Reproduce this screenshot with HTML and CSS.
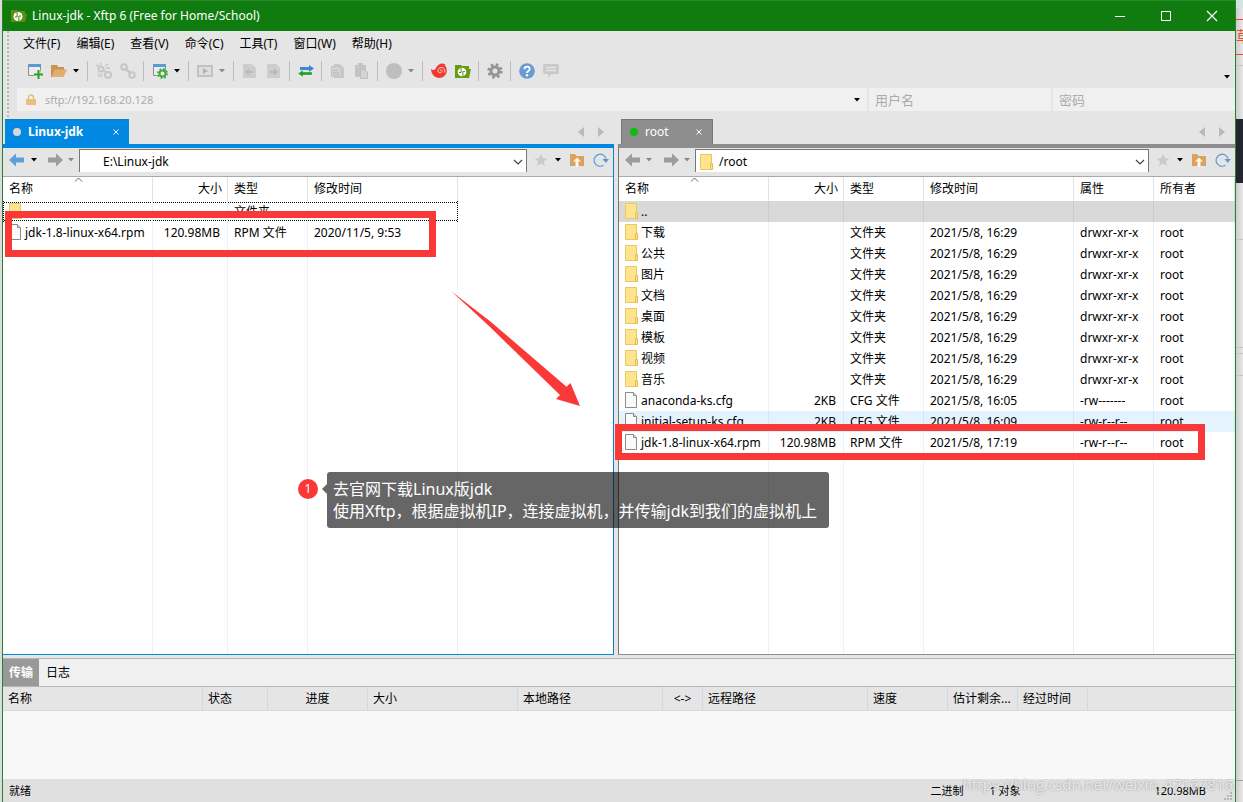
FILE: index.html
```
<!DOCTYPE html>
<html lang="zh-CN">
<head>
<meta charset="utf-8">
<title>Linux-jdk - Xftp 6</title>
<link rel="stylesheet" href="styles.css">
</head>
<body>
<svg class="defs" aria-hidden="true">
  <symbol id="folder" viewBox="0 0 13 16"><path d="M.5.5h11v15H.5z" fill="#ffe48f" stroke="#ecc75a"/><path d="M10.500 9.500h2v6h-2z" fill="#ffe48f" stroke="#e9bd45"/></symbol>
  <symbol id="file" viewBox="0 0 13 16"><path d="M.5.5h8l3 3v12H.5z" fill="#fafafa" stroke="#8b8b8b"/><path d="M8.500.5v3h3" fill="#ddd" stroke="#8b8b8b"/></symbol>
  <symbol id="caret" viewBox="0 0 6 4"><path d="M0 0h6L3 3.500z" fill="currentColor"/></symbol>
  <symbol id="back" viewBox="0 0 16 14"><path d="M0 7l7-6.500V4.500h8v5H7v4z" fill="currentColor"/></symbol>
  <symbol id="fwd" viewBox="0 0 16 14"><path d="M16 7L9 .5V4.500H1v5h8v4z" fill="currentColor"/></symbol>
  <symbol id="star" viewBox="0 0 14 14"><path d="M7 .8l1.800 4.200 4.600.4-3.500 3 1.100 4.600-4-2.500L3 13l1.100-4.600-3.500-3L5.200 5z" fill="#cbcbcb"/></symbol>
  <symbol id="up" viewBox="0 0 16 14"><path d="M1 1h5l1.500 2H15v10H1z" fill="#d8a25f"/><path d="M8 4.500l4 4h-2.500V14h-3V8.500H4z" fill="#fff4e6"/></symbol>
  <symbol id="refresh" viewBox="0 0 16 16"><path d="M10.500 13.200A6 6 0 1 1 13 7" fill="none" stroke="#5b9bd5" stroke-width="1.200"/><path d="M9.500 7H16l-3.200 4z" fill="#5b9bd5"/></symbol>
  <symbol id="chev" viewBox="0 0 10 6"><path d="M1 1l4 4 4-4" fill="none" stroke="#444" stroke-width="1.200"/></symbol>
  <symbol id="left" viewBox="0 0 6 10"><path d="M6 0v10L0 5z" fill="#bababa"/></symbol>
  <symbol id="right" viewBox="0 0 6 10"><path d="M0 0v10l6-5z" fill="#bababa"/></symbol>
  <symbol id="sort" viewBox="0 0 9 5"><path d="M1 4.500l3.500-3.500 3.500 3.500" fill="none" stroke="#666"/></symbol>
  <symbol id="cross" viewBox="0 0 8 8"><path d="M1.500 1.500l5 5m0-5l-5 5" stroke="#fff" fill="none"/></symbol>
  <symbol id="xftp" viewBox="0 0 16 16"><path d="M0 2h6l1 1h7v3h2l-2 9H0z" fill="#6a9a13"/><circle cx="7" cy="9" r="4.300" fill="#fff"/><path d="M6.100 5v4.500H4M7.900 13V8.500H10" stroke="#5c8c10" fill="none" stroke-width="1"/></symbol>
  <symbol id="gear" viewBox="0 0 16 16"><circle cx="8" cy="8" r="6.200" fill="none" stroke="currentColor" stroke-width="3" stroke-dasharray="2.500 2.370"/><circle cx="8" cy="8" r="4" fill="none" stroke="currentColor" stroke-width="3"/></symbol>
</svg>

<main class="window">
  <header class="titlebar">
    <svg class="app-icon" viewBox="0 0 16 14"><path d="M0 1h6l1 1h7v3h2l-2 8H0z" fill="#5e8f0f"/><circle cx="7" cy="7.500" r="4.500" fill="#fff"/><path d="M6.100 3v5H4M7.900 12V7H10" stroke="#4d8010" fill="none" stroke-width="1"/></svg>
    <h1>Linux-jdk - Xftp 6 (Free for Home/School)</h1>
    <button class="win-btn" aria-label="最小化"><svg viewBox="0 0 12 12"><path d="M1 6.500h10" stroke="#fff"/></svg></button>
    <button class="win-btn" aria-label="最大化"><svg viewBox="0 0 12 12"><path d="M1.500 1.500h9v9h-9z" stroke="#fff" fill="none"/></svg></button>
    <button class="win-btn" aria-label="关闭"><svg viewBox="0 0 12 12"><path d="M1 1l10 10m0-10L1 11" stroke="#fff" stroke-width="1.200"/></svg></button>
  </header>

  <div class="bars">
    <nav class="menu">
      <button>文件(F)</button><button>编辑(E)</button><button>查看(V)</button><button>命令(C)</button><button>工具(T)</button><button>窗口(W)</button><button>帮助(H)</button>
    </nav>
    <div class="toolbar">
      <button class="tool" aria-label="新建"><svg viewBox="0 0 16 16"><path d="M1.500 1.500h12v11h-12z" fill="#ececec" stroke="#8d8d8d"/><path d="M1 1h13v3H1z" fill="#5b9bd5"/><path d="M11.500 7v9M7 11.500h9" stroke="#e5e5e5" stroke-width="4"/><path d="M11.500 7v9M7 11.500h9" stroke="#27a127" stroke-width="2"/></svg></button>
      <button class="tool" aria-label="打开"><svg viewBox="0 0 16 16"><path d="M0 2h6l1 2h6v3H4l-3 7H0z" fill="#c99450"/><path d="M4 6.500h12L12.500 14H.5z" fill="#dfae70"/></svg></button>
      <button class="drop" aria-label="打开菜单"><svg><use href="#caret"/></svg></button>
      <span class="sep"></span>
      <button class="tool" aria-label="断开"><svg viewBox="0 0 16 16" fill="none" stroke="#c6c6c6" stroke-width="2"><circle cx="5" cy="6" r="2.500"/><circle cx="12" cy="12" r="3"/><path d="M0 2l3 1M5 0v2M9 3l3-2M8 7l2 2M10 5h4M3 10v4M6 11l-1 3" stroke-width="1.500"/></svg></button>
      <button class="tool" aria-label="重新连接"><svg viewBox="0 0 16 16" fill="none" stroke="#c6c6c6" stroke-width="2"><circle cx="4" cy="4" r="2.800"/><circle cx="12" cy="12" r="2.800"/><path d="M5 5l6 6" stroke-width="2.500"/></svg></button>
      <span class="sep"></span>
      <button class="tool" aria-label="会话属性"><svg viewBox="0 0 16 16"><path d="M1.500 1.500h12v11h-12z" fill="#ececec" stroke="#8d8d8d"/><path d="M1 1h13v3H1z" fill="#5b9bd5"/><circle cx="10.500" cy="10.500" r="3" fill="#eee" stroke="#3faa42" stroke-width="2"/><circle cx="10.500" cy="10.500" r="4.500" fill="none" stroke="#3faa42" stroke-width="2" stroke-dasharray="1.700 1.830"/></svg></button>
      <button class="drop" aria-label="属性菜单"><svg><use href="#caret"/></svg></button>
      <span class="sep"></span>
      <button class="tool" aria-label="运行"><svg viewBox="0 0 16 16"><path d="M1 3h14v10H1z" fill="#dedede" stroke="#c2c2c2" stroke-width="2"/><path d="M6 5l5 3-5 3z" fill="#b2b2b2"/></svg></button>
      <button class="drop dim" aria-label="运行菜单"><svg><use href="#caret"/></svg></button>
      <span class="sep"></span>
      <button class="tool" aria-label="向左传输"><svg viewBox="0 0 16 16"><path d="M1 1h9l4 4v10H1z" fill="#cdcdcd"/><path d="M3 9l4-3.500V8h4v2H7v2.500z" fill="#b8b8b8"/></svg></button>
      <button class="tool" aria-label="向右传输"><svg viewBox="0 0 16 16"><path d="M1 1h9l4 4v10H1z" fill="#cdcdcd"/><path d="M12 9L8 5.500V8H4v2h4v2.500z" fill="#b8b8b8"/></svg></button>
      <span class="sep"></span>
      <button class="tool" aria-label="同步"><svg viewBox="0 0 16 16"><path d="M16 5.500L11 2v2H2v3h9v2z" fill="#3f87d2"/><path d="M0 10.500L5 7v2h9v3H5v2z" fill="#1fa01f" stroke="#e5e5e5" stroke-width=".4"/></svg></button>
      <span class="sep"></span>
      <button class="tool" aria-label="复制"><svg viewBox="0 0 16 16"><path d="M4 1h6l4 4v10H4z" fill="#c9c9c9"/><path d="M1.500 3.500h7l3 3v7h-10z" fill="#d3d3d3" stroke="#c2c2c2"/><path d="M3 7.500h5M3 9.500h6M3 11.500h6" stroke="#bcbcbc"/></svg></button>
      <button class="tool" aria-label="粘贴"><svg viewBox="0 0 16 16"><path d="M1 2h3V0h5v2h3v12H1z" fill="#c4c4c4"/><path d="M6.500 6.500h4l3 3v6h-7z" fill="#d3d3d3" stroke="#bebebe"/></svg></button>
      <span class="sep"></span>
      <button class="tool" aria-label="停止"><svg viewBox="0 0 16 16"><circle cx="8" cy="8" r="8" fill="#bebebe"/></svg></button>
      <button class="drop dim" aria-label="停止菜单"><svg><use href="#caret"/></svg></button>
      <span class="sep"></span>
      <button class="tool" aria-label="Xshell"><svg viewBox="0 0 16 16"><path d="M0 6c2 2 4 1 5-1C7 1 11-.5 14.500 1.500c-1 .5-1 1 0 1.500C18 9 14 15 8 15 4 15 0 11 0 6z" fill="#ee3a30"/><path d="M9 7.500c1.500-1.500 3 .5 1.500 1.700C8 11 5.500 8 8 5.500c3-2.500 7 0 5.500 4" fill="none" stroke="#ffd9d4"/></svg></button>
      <button class="tool" aria-label="Xftp"><svg><use href="#xftp"/></svg></button>
      <span class="sep"></span>
      <button class="tool gear" aria-label="选项"><svg><use href="#gear"/></svg></button>
      <span class="sep"></span>
      <button class="tool" aria-label="帮助"><svg viewBox="0 0 16 16"><circle cx="8" cy="8" r="7.800" fill="#689bd0"/><path d="M5.500 6.200c0-3.400 5.200-3.200 5.200-.2C10.700 8 8 8 8 10" fill="none" stroke="#fff" stroke-width="1.800"/><circle cx="8" cy="12.300" r="1.200" fill="#fff"/></svg></button>
      <button class="tool" aria-label="反馈"><svg viewBox="0 0 16 16"><path d="M2 1h12q2 0 2 2v6q0 2-2 2H8l-3 4v-4H2q-2 0-2-2V3q0-2 2-2z" fill="#c9c9c9"/><path d="M3 4.500h10M3 7.500h10" stroke="#e5e5e5" stroke-width="1.400"/></svg></button>
      <button class="drop more" aria-label="更多"><svg><use href="#caret"/></svg></button>
    </div>
    <form class="address">
      <label class="url"><svg viewBox="0 0 10 12"><path d="M2.500 5V3.500a2.500 2.500 0 0 1 5 0V5" fill="none" stroke="#e6be85" stroke-width="1.500"/><path d="M0 5h10v6H0z" fill="#e9bf83"/></svg><input aria-label="地址" value="sftp://192.168.20.128"><svg class="caret"><use href="#caret"/></svg></label>
      <input class="cred" aria-label="用户名" placeholder="用户名">
      <input class="cred" aria-label="密码" placeholder="密码">
    </form>
  </div>

  <div class="panes">
    <section class="pane local">
      <div class="tabs"><button class="tab"><i class="dot"></i><span>Linux-jdk</span><svg><use href="#cross"/></svg></button>
        <button class="scroll" aria-label="上一个"><svg><use href="#left"/></svg></button><button class="scroll" aria-label="下一个"><svg><use href="#right"/></svg></button></div>
      <div class="frame">
        <div class="pathbar">
          <button class="go active" aria-label="后退"><svg><use href="#back"/></svg></button><button class="drop" aria-label="后退历史"><svg><use href="#caret"/></svg></button>
          <button class="go" aria-label="前进"><svg><use href="#fwd"/></svg></button><button class="drop dim" aria-label="前进历史"><svg><use href="#caret"/></svg></button>
          <label class="path"><input aria-label="本地目录" value="E:\Linux-jdk"><svg class="chev"><use href="#chev"/></svg></label>
          <button class="star" aria-label="收藏"><svg><use href="#star"/></svg></button><button class="drop" aria-label="收藏夹"><svg><use href="#caret"/></svg></button>
          <button class="up" aria-label="上级目录"><svg><use href="#up"/></svg></button><button class="re" aria-label="刷新"><svg><use href="#refresh"/></svg></button>
        </div>
        <table class="files">
          <colgroup><col class="c150"><col class="c75"><col class="c80"><col class="c150"><col></colgroup>
          <thead><tr><th>名称<svg class="sort"><use href="#sort"/></svg></th><th class="num">大小</th><th>类型</th><th>修改时间</th><th></th></tr></thead>
          <tbody>
            <tr class="focus"><td><svg><use href="#folder"/></svg>..</td><td></td><td>文件夹</td><td></td><td></td></tr>
            <tr><td><svg><use href="#file"/></svg>jdk-1.8-linux-x64.rpm</td><td class="num">120.98MB</td><td>RPM 文件</td><td>2020/11/5, 9:53</td><td></td></tr>
            <tr class="fill"><td></td><td></td><td></td><td></td><td></td></tr>
          </tbody>
        </table>
      </div>
    </section>

    <section class="pane remote">
      <div class="tabs"><button class="tab"><i class="dot"></i><span>root</span><svg><use href="#cross"/></svg></button>
        <button class="scroll" aria-label="上一个"><svg><use href="#left"/></svg></button><button class="scroll" aria-label="下一个"><svg><use href="#right"/></svg></button></div>
      <div class="frame">
        <div class="pathbar">
          <button class="go" aria-label="后退"><svg><use href="#back"/></svg></button><button class="drop dim" aria-label="后退历史"><svg><use href="#caret"/></svg></button>
          <button class="go" aria-label="前进"><svg><use href="#fwd"/></svg></button><button class="drop dim" aria-label="前进历史"><svg><use href="#caret"/></svg></button>
          <label class="path"><svg class="pf"><use href="#folder"/></svg><input aria-label="远程目录" value="/root"><svg class="chev"><use href="#chev"/></svg></label>
          <button class="star" aria-label="收藏"><svg><use href="#star"/></svg></button><button class="drop" aria-label="收藏夹"><svg><use href="#caret"/></svg></button>
          <button class="up" aria-label="上级目录"><svg><use href="#up"/></svg></button><button class="re" aria-label="刷新"><svg><use href="#refresh"/></svg></button>
        </div>
        <table class="files">
          <colgroup><col class="c150"><col class="c75"><col class="c80"><col class="c150"><col class="c80"><col></colgroup>
          <thead><tr><th>名称<svg class="sort"><use href="#sort"/></svg></th><th class="num">大小</th><th>类型</th><th>修改时间</th><th>属性</th><th>所有者</th></tr></thead>
          <tbody>
            <tr class="selected"><td><svg><use href="#folder"/></svg>..</td><td></td><td></td><td></td><td></td><td></td></tr>
            <tr><td><svg><use href="#folder"/></svg>下载</td><td></td><td>文件夹</td><td>2021/5/8, 16:29</td><td>drwxr-xr-x</td><td>root</td></tr>
            <tr><td><svg><use href="#folder"/></svg>公共</td><td></td><td>文件夹</td><td>2021/5/8, 16:29</td><td>drwxr-xr-x</td><td>root</td></tr>
            <tr><td><svg><use href="#folder"/></svg>图片</td><td></td><td>文件夹</td><td>2021/5/8, 16:29</td><td>drwxr-xr-x</td><td>root</td></tr>
            <tr><td><svg><use href="#folder"/></svg>文档</td><td></td><td>文件夹</td><td>2021/5/8, 16:29</td><td>drwxr-xr-x</td><td>root</td></tr>
            <tr><td><svg><use href="#folder"/></svg>桌面</td><td></td><td>文件夹</td><td>2021/5/8, 16:29</td><td>drwxr-xr-x</td><td>root</td></tr>
            <tr><td><svg><use href="#folder"/></svg>模板</td><td></td><td>文件夹</td><td>2021/5/8, 16:29</td><td>drwxr-xr-x</td><td>root</td></tr>
            <tr><td><svg><use href="#folder"/></svg>视频</td><td></td><td>文件夹</td><td>2021/5/8, 16:29</td><td>drwxr-xr-x</td><td>root</td></tr>
            <tr><td><svg><use href="#folder"/></svg>音乐</td><td></td><td>文件夹</td><td>2021/5/8, 16:29</td><td>drwxr-xr-x</td><td>root</td></tr>
            <tr><td><svg><use href="#file"/></svg>anaconda-ks.cfg</td><td class="num">2KB</td><td>CFG 文件</td><td>2021/5/8, 16:05</td><td>-rw-------</td><td>root</td></tr>
            <tr class="hover"><td><svg><use href="#file"/></svg>initial-setup-ks.cfg</td><td class="num">2KB</td><td>CFG 文件</td><td>2021/5/8, 16:09</td><td>-rw-r--r--</td><td>root</td></tr>
            <tr><td><svg><use href="#file"/></svg>jdk-1.8-linux-x64.rpm</td><td class="num">120.98MB</td><td>RPM 文件</td><td>2021/5/8, 17:19</td><td>-rw-r--r--</td><td>root</td></tr>
            <tr class="fill"><td></td><td></td><td></td><td></td><td></td><td></td></tr>
          </tbody>
        </table>
      </div>
    </section>
  </div>

  <section class="transfers">
    <div class="ttabs"><button class="on">传输</button><button>日志</button></div>
    <table class="queue">
      <colgroup><col class="c200"><col class="c65"><col class="c100"><col class="c150"><col class="c145"><col class="c40"><col class="c165"><col class="c80"><col class="c70"><col class="c70"><col></colgroup>
      <thead><tr><th>名称</th><th>状态</th><th class="mid">进度</th><th>大小</th><th>本地路径</th><th class="mid">&lt;-&gt;</th><th>远程路径</th><th>速度</th><th>估计剩余...</th><th>经过时间</th><th></th></tr></thead>
    </table>
  </section>

  <footer class="status"><span class="ready">就绪</span><span class="mode">二进制</span><span class="count">1 对象</span><span class="size">120.98MB</span>
    <svg class="grip" viewBox="0 0 8 8"><path d="M6 0h2v2H6zM3 3h2v2H3zM6 3h2v2H6zM0 6h2v2H0zM3 6h2v2H3zM6 6h2v2H6z" fill="#b5b5b5"/></svg></footer>
</main>

<aside class="behind"><span>草</span></aside>

<div class="mark mark-local"></div>
<div class="mark mark-remote"></div>
<svg class="arrow" viewBox="0 0 130 116"><path d="M0 0L40 31 115.500 95.700 119.500 92 129 115 105 108 109 104 38 35z" fill="#fb3838"/></svg>
<span class="step">1</span>
<p class="note">去官网下载Linux版jdk<br>使用Xftp，根据虚拟机IP，连接虚拟机，并传输jdk到我们的虚拟机上</p>
<span class="watermark">https://blog.csdn.net/weixin_47167816</span>
</body>
</html>
```

FILE: styles.css
```
* { box-sizing: border-box; }
body {
  margin: 0;
  display: flex;
  height: 100vh;
  min-height: 600px;
  position: relative;
  overflow: hidden;
  background: #dcdcdc;
  color: #000;
  font: 12px/20px "Noto Sans", "Noto Sans CJK SC", sans-serif;
}
button, input { font: inherit; color: inherit; border: 0; background: none; padding: 0; margin: 0; }
input { outline: 0; min-width: 0; }
svg { display: block; flex: none; }
.defs { position: absolute; width: 0; height: 0; }

.window {
  flex: 1;
  min-width: 0;
  margin-left: 2px;
  display: flex;
  flex-direction: column;
  border: solid #25832a;
  border-width: 0 1px;
  background: #e5e5e5;
}
.titlebar { display: flex; align-items: center; height: 31px; padding-left: 8px; background: #107c10; border-top: 1px solid #2a8a2a; color: #fff; }
.app-icon { width: 16px; height: 14px; }
h1 { flex: 1; margin: 0 0 0 5px; font: inherit; }
.win-btn { width: 46px; height: 30px; display: grid; place-items: center; }
.win-btn svg { width: 12px; height: 12px; }

.bars { padding-bottom: 8px; background: linear-gradient(#b9b9b9 50%, transparent 50%) 4px 0 / 2px 4px repeat-y; }
.menu { display: flex; height: 26px; padding-left: 12px; }
.menu button { padding: 0 8px; }
.toolbar { display: flex; align-items: center; height: 28px; padding-left: 20px; margin-bottom: 3px; }
.tool { width: 24px; padding: 0 4px; }
.tool svg { width: 16px; height: 16px; }
.gear { color: #949494; }
.sep { width: 1px; height: 20px; margin: 0 4px 0 3px; background: #bdbdbd; }
.drop { width: 13px; padding-left: 2px; }
.drop svg, .caret { width: 6px; height: 4px; }
.dim { color: #888; }
.more { margin: 12px 0 0 auto; }
.address { display: flex; gap: 2px; height: 23px; padding-left: 14px; color: #a8a8a8; }
.url { flex: 1; display: flex; align-items: center; padding: 0 7px 0 9px; background: #f0f0f0; }
.url > svg:first-child { width: 10px; height: 12px; }
.url input { flex: 1; padding-left: 9px; font: 11px/20px "Open Sans", sans-serif; }
.url .caret { color: #000; }
.cred { width: 182px; padding: 0 6px; background: #f0f0f0; font-size: 13px; }
.cred::placeholder { color: #ababab; }

.panes { flex: 1; min-height: 0; display: grid; grid-template-columns: 611fr 617fr; gap: 4px; margin-bottom: 3px; }
.pane { --edge: #8e8e8e; --line: #777; display: flex; flex-direction: column; min-width: 0; }
.local { --edge: #0088e2; --line: #0b7fca; }
.tabs { display: flex; height: 25px; padding-left: 2px; }
.tab { display: flex; align-items: center; width: 124px; margin-right: auto; padding: 0 9px 0 8px; background: var(--edge); color: #fff; font-weight: bold; border-top: 1px solid var(--line); }
.tab span { flex: 1; text-align: left; padding-left: 7px; }
.tab svg { width: 8px; height: 8px; }
.remote .tabs { padding-left: 3px; }
.remote .tab { width: 92px; border-right: 1px solid #777; border-left: 1px solid #777; font-weight: normal; }
.dot { width: 8px; height: 8px; border-radius: 50%; background: #d8d8d8; }
.remote .dot { background: #10ba10; }
.scroll { width: 20px; display: grid; place-items: center; }
.scroll:last-child { margin-right: 3px; }
.scroll svg { width: 6px; height: 10px; }
.frame { flex: 1; min-height: 0; display: flex; flex-direction: column; border-top: 4px solid var(--edge); border-bottom: 1px solid var(--edge); background: #fff; }
.local .frame { border-right: 1px solid var(--line); }
.remote .frame { border-left: 1px solid var(--line); }
.pathbar { display: flex; height: 29px; align-items: center; padding: 0 0 4px 6px; background: #e5e5e5; border-bottom: 1px solid #aaa; }
.go { width: 20px; color: #9b9b9b; }
.go.active { color: #5d9fd7; }
.go svg { width: 16px; height: 14px; }
.pathbar .drop { width: 18px; }
.pathbar .dim { width: 12px; padding-left: 1px; }
.remote .go:first-child + .dim { width: 18px; }
.path { flex: 1; min-width: 0; align-self: stretch; margin-top: 1px; display: flex; align-items: center; background: #fff; border: solid #777; border-width: 1px 1px 0; padding: 2px 3px 0 4px; }
.local .path { padding-left: 23px; }
.path input { flex: 1; padding-left: 0; }
.pf { width: 13px; height: 16px; margin-right: 6px; }
.chev { width: 10px; height: 6px; }
.star { width: 26px; padding-left: 7px; }
.star svg { width: 14px; height: 14px; }
.star + .drop { width: 16px; }
.up { width: 24px; }
.up svg { width: 16px; height: 14px; }
.re { width: 20px; }
.re svg { width: 16px; height: 16px; }

table { width: 100%; table-layout: fixed; border-collapse: separate; border-spacing: 0; }
th, td { padding: 0 5px 0 6px; text-align: left; font-weight: normal; white-space: nowrap; overflow: hidden; }
.c40 { width: 40px; } .c65 { width: 65px; } .c70 { width: 70px; } .c75 { width: 75px; } .c80 { width: 80px; }
.c100 { width: 100px; } .c145 { width: 145px; } .c150 { width: 150px; } .c165 { width: 165px; } .c200 { width: 200px; }
.files { flex: 1; min-height: 0; }
.files th { position: relative; height: 24px; border-right: 1px solid #e2e2e2; }
.files td { height: 21px; border-right: 1px solid #e9f1fa; }
.files .fill td { height: auto; }
.files td:first-child { padding-right: 0; }
.local th:last-child, .local td:last-child { border-right: 0; }
.files td svg { display: inline-block; width: 13px; height: 16px; margin: 0 3px 2px 0; vertical-align: middle; }
.files .num { text-align: right; padding-right: 7px; }
.files th.num { padding-right: 5px; }
.sort { position: absolute; top: 0; left: 71px; width: 9px; height: 5px; }
.selected td { background: #d9d9d9; border-color: #c5ced8; }
.hover td { background: #e5f3fe; border-color: #d3e6f8; }
.focus td:not(:last-child) { background: linear-gradient(90deg, #000 50%, transparent 50%) 0 1px / 2px 1px repeat-x, linear-gradient(90deg, #000 50%, transparent 50%) 0 19px / 2px 1px repeat-x; }
.focus td:first-child { border-left: 1px dotted #000; padding-left: 5px; }
.focus td:nth-child(4) { border-right: 1px dotted #000; }

.transfers { border-top: 1px solid #b5b5b5; height: 121px; background: #f8f8f8; }
.ttabs { display: flex; height: 28px; background: #f0f0f0; border-bottom: 1px solid #b5b5b5; }
.ttabs button { width: 36px; }
.ttabs .on { background: #999; color: #fff; font-weight: bold; }
.ttabs button + button { width: 38px; }
.queue th { height: 24px; padding: 0 0 0 5px; background: #e5e5e5; border-right: 1px solid #d0d8e4; border-bottom: 1px solid #d0d8e4; }
.queue th:last-child { border-right: 0; }
.queue .mid { text-align: center; padding: 0; }

.status { display: flex; align-items: center; height: 23px; padding-left: 6px; background: #e0e0e0; font-size: 11px; }
.ready { flex: 1; }
.mode { width: 59px; }
.count { width: 165px; }
.grip { width: 8px; height: 8px; margin: 10px 3px 0 18px; }

.behind {
  width: 7px;
  overflow: hidden;
  color: #ec4b2c;
  font-size: 15px;
  padding-top: 26px;
  background:
    linear-gradient(#cfe5dd, #cfe5dd) 0 0 / 7px 8px no-repeat,
    linear-gradient(#ec4b2c, #ec4b2c) 0 19px / 7px 1px no-repeat,
    linear-gradient(#ec4b2c, #ec4b2c) 0 54px / 7px 1px no-repeat,
    linear-gradient(#c5c5c5, #c5c5c5) 0 65px / 7px 1px no-repeat,
    linear-gradient(#23262e, #23262e) 0 119px / 7px 64px no-repeat,
    linear-gradient(#c5c5c5, #c5c5c5) 0 239px / 7px 1px no-repeat,
    linear-gradient(#c5c5c5, #c5c5c5) 0 347px / 7px 1px no-repeat,
    linear-gradient(#c5c5c5, #c5c5c5) 0 353px / 7px 1px no-repeat,
    linear-gradient(#c5c5c5, #c5c5c5) 0 375px / 7px 1px no-repeat,
    linear-gradient(#a5a5a5, #a5a5a5) 0 780px / 7px 1px no-repeat,
    linear-gradient(90deg, #cecece, #e8e8e8);
}

.mark { position: absolute; border: 7px solid #fb3838; }
.mark-local { left: 5px; top: 211px; width: 431px; height: 46px; }
.mark-remote { left: 615px; top: 424px; width: 590px; height: 36px; }
.arrow { position: absolute; left: 451px; top: 291px; width: 130px; height: 116px; }
.step { position: absolute; left: 298px; top: 479px; width: 20px; height: 20px; border-radius: 50%; background: #fb3838; color: #fff; text-align: center; }
.note { position: absolute; left: 327px; top: 472px; margin: 0; padding: 6px 12px 6px 6px; border-radius: 3px; background: rgba(0, 0, 0, .6); color: #fff; font: 16px/22px "Noto Sans", "Noto Sans CJK SC", sans-serif; white-space: nowrap; }
.note::before { content: ""; position: absolute; left: -5px; top: 12px; border: solid transparent; border-width: 5px 5px 5px 0; border-right-color: rgba(0, 0, 0, .6); }
.watermark { position: absolute; right: 10px; bottom: 8px; font: 15px/20px "Open Sans", sans-serif; color: rgba(255, 255, 255, .75); text-shadow: 0 0 2px rgba(0, 0, 0, .4); }
```
